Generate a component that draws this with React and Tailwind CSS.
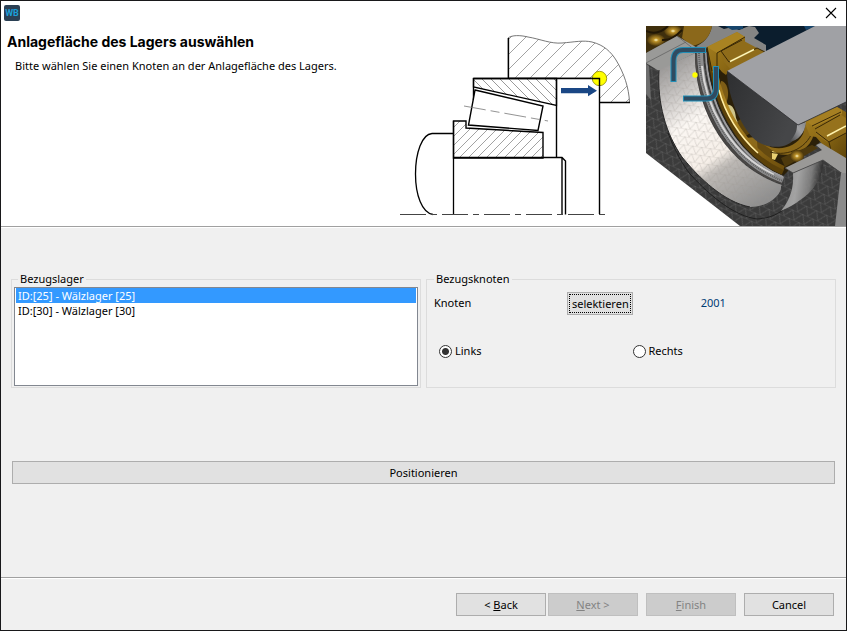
import { useState } from "react";

const bearings = [
  { id: 25, label: "ID:[25] - Wälzlager [25]" },
  { id: 30, label: "ID:[30] - Wälzlager [30]" },
];

export default function App() {
  return (
    <div className="min-h-screen flex flex-col border border-[#18181a] bg-[#f0f0f0] font-['Noto_Sans','Open_Sans',sans-serif] text-[11px] text-black">
      <TitleBar />
      <Header />
      <Content />
      <Footer />
    </div>
  );
}

/* ─── Window title bar ─── */
function TitleBar() {
  return (
    <div className="flex h-[25px] items-start justify-between bg-white pl-[3px] pr-[7px] pt-1">
      <svg width="16" height="16" viewBox="0 0 16 16" aria-label="WB">
        <rect width="16" height="16" rx="2" fill="#2b4054" />
        <text x="8" y="11" textAnchor="middle" fontFamily="Roboto, sans-serif" fontSize="9" fontWeight="bold" fill="#1b9fd8">WB</text>
      </svg>
      <button type="button" aria-label="Close" className="flex h-4 w-4 items-center justify-center">
        <svg width="12" height="12" viewBox="0 0 12 12" fill="none" stroke="#000" strokeWidth="1.1">
          <path d="M1 1 11 11M11 1 1 11" />
        </svg>
      </button>
    </div>
  );
}

/* ─── White header with the two illustrations ─── */
function Header() {
  return (
    <header className="flex border-b border-[#a0a0a0] bg-white">
      <div className="min-w-0 flex-1 pl-[6px] pt-2">
        <h1 className="font-['Inter','Liberation_Sans',sans-serif] text-sm leading-4 font-bold">
          Anlagefläche des Lagers auswählen
        </h1>
        <p className="pl-2 pt-2 leading-4">
          Bitte wählen Sie einen Knoten an der Anlagefläche des Lagers.
        </p>
      </div>
      <BearingDrawing />
      <BearingRender />
    </header>
  );
}

function BearingDrawing() {
  return (
    <svg className="mr-[14px] shrink-0" width="232" height="200" viewBox="400 26 232 200" fill="none" stroke="#000">
      <defs>
        <pattern id="hatchWide" width="15" height="15" patternUnits="userSpaceOnUse" x="5" y="3">
          <path d="M-1 16 16 -1M-1 1 1 -1M14 16 16 14" stroke="#8a8a8a" strokeWidth="0.8" />
        </pattern>
        <pattern id="hatchInner" width="9" height="9" patternUnits="userSpaceOnUse" x="3" y="2">
          <path d="M-1 10 10 -1M-1 1 1 -1M8 10 10 8" stroke="#8a8a8a" strokeWidth="0.8" />
        </pattern>
        <pattern id="hatchOuter" width="9" height="9" patternUnits="userSpaceOnUse" x="4" y="6">
          <path d="M-1 -1 10 10M8 -1 10 1M-1 8 1 10" stroke="#808080" strokeWidth="0.8" />
        </pattern>
      </defs>

      {/* housing */}
      <path
        d="M508 78V38C512 35 520 35 528 37C540 39 551 44 562 43C575 42 583 40 592 42C604 45 611 52 616 60C624 73 629 88 629.500 102.500H599.500V78Z"
        fill="url(#hatchWide)"
        stroke="#555"
        strokeWidth="0.8"
      />
      <path d="M508.500 38V78M600 102.500H630" strokeWidth="1.3" />

      {/* outer ring */}
      <path d="M473.500 78.500H556.500V105.500L473.500 87Z" fill="url(#hatchOuter)" strokeWidth="1.3" />
      <path d="M473.500 78.500H599.500V214M473.500 78V100M556.500 78V158" strokeWidth="1.4" />

      {/* roller */}
      <path d="M475 90 543 106 538 130.500 468.500 125Z" fill="#fff" strokeWidth="1.4" />
      <path d="M464 106 548 121" stroke="#777" strokeWidth="0.8" strokeDasharray="22 5 9 5" />

      {/* inner ring */}
      <path d="M453.500 158V121H466V128L543 132.500V158Z" fill="url(#hatchInner)" strokeWidth="1.4" />

      {/* shaft */}
      <path d="M453 133.500H432C422 134 415.500 153 415.500 174C415.500 195 422 213 433 214.500M453.500 121V214.500" strokeWidth="1.3" />
      <path d="M453 157.500H562L565.500 161V214.500M562 158V214.500" strokeWidth="1.4" />
      <path d="M400 214.500H608" stroke="#444" strokeDasharray="26 5 6 5" />

      {/* contact point */}
      <circle cx="599.500" cy="78.500" r="7.200" fill="#ff0" stroke="#8a8400" strokeWidth="0.8" />
      <path d="M592 78.500H599.500V86" strokeWidth="1.4" />
      <path d="M561 88H588V85L597 90.700 588 96.300V93.300H561Z" fill="#1a4785" stroke="none" />
    </svg>
  );
}

function BearingRender() {
  return (
    <svg className="shrink-0" width="200" height="200" viewBox="0 0 200 200">
      <defs>
        <pattern id="meshDark" width="11" height="9" patternUnits="userSpaceOnUse" patternTransform="rotate(24)">
          <path d="M0 0H11M0 0 5 9 11 0" stroke="#7a7a7a" strokeWidth="0.4" fill="none" />
        </pattern>
        <pattern id="meshLight" width="9" height="8" patternUnits="userSpaceOnUse" patternTransform="rotate(8)">
          <path d="M0 0H9M0 0 4 8 9 0" stroke="#99958f" strokeWidth="0.3" fill="none" />
        </pattern>
        <linearGradient id="race" x1="20" y1="40" x2="110" y2="180" gradientUnits="userSpaceOnUse">
          <stop offset="0" stopColor="#9c9a99" />
          <stop offset="0.18" stopColor="#c9c6c4" />
          <stop offset="0.36" stopColor="#fbf7f3" />
          <stop offset="0.62" stopColor="#f6efe8" />
          <stop offset="0.7" stopColor="#bdb9b5" />
          <stop offset="1" stopColor="#8f8f8f" />
        </linearGradient>
        <linearGradient id="gold" x1="0" y1="0" x2="1" y2="1">
          <stop offset="0" stopColor="#a98322" />
          <stop offset="0.5" stopColor="#8b6814" />
          <stop offset="1" stopColor="#5c430a" />
        </linearGradient>
        <linearGradient id="blockFront" x1="0" y1="0" x2="1" y2="0.4">
          <stop offset="0" stopColor="#2e2f31" />
          <stop offset="1" stopColor="#454648" />
        </linearGradient>
        <linearGradient id="blockSide" x1="0" y1="1" x2="1" y2="0">
          <stop offset="0" stopColor="#3c3d3f" />
          <stop offset="0.6" stopColor="#9fa0a3" />
          <stop offset="1" stopColor="#86878a" />
        </linearGradient>
        <linearGradient id="lip" x1="0" y1="0" x2="1" y2="0.2">
          <stop offset="0" stopColor="#8e8e8e" />
          <stop offset="0.45" stopColor="#a3a3a3" />
          <stop offset="0.75" stopColor="#7b7b7b" />
          <stop offset="1" stopColor="#262626" />
        </linearGradient>
        <linearGradient id="ringGold" x1="66" y1="30" x2="137" y2="144" gradientUnits="userSpaceOnUse">
          <stop offset="0" stopColor="#7d5b10" />
          <stop offset="0.4" stopColor="#b58b24" />
          <stop offset="0.75" stopColor="#8a6616" />
          <stop offset="1" stopColor="#6b4d0c" />
        </linearGradient>
        <radialGradient id="roller">
          <stop offset="0" stopColor="#fff8c8" />
          <stop offset="0.3" stopColor="#b98f28" />
          <stop offset="1" stopColor="#4b360b" />
        </radialGradient>
      </defs>

      {/* dark meshed cut face */}
      <path d="M0 0H200V200H94L0 127Z" fill="#3b3b3b" />
      <path d="M0 0H200V200H94L0 127Z" fill="url(#meshDark)" />

      {/* background behind the rollers */}
      <path d="M60 0H200V60H110L60 30Z" fill="#0b1d2d" />
      <path d="M66 0H72L78 3 86 1 93 4 103 0 109 1 113 7 108 12 120 19 120 26 60 26 50 20Z" fill="#858584" />
      <path d="M79 0 86 4 97 3V0ZM158 0 160 4 170 0Z" fill="#17456b" />
      <path d="M0 0H66C64 11 57 18 48 21L31 10 0 27Z" fill="#3f2f0d" />
      <path d="M38 0H66C64 11 57 18 46 20L36 12Z" fill="#8b681b" />
      <ellipse cx="10" cy="14" rx="9" ry="6" fill="url(#roller)" />
      <ellipse cx="27" cy="5" rx="9" ry="6" fill="url(#roller)" />
      <path d="M0 5Q12 10 22 0M16 14Q26 15 36 4" stroke="#211706" strokeWidth="2" fill="none" />

      {/* top face of the outer ring */}
      <path d="M0 27 31 10 60 27 49 27 13 45 0 37Z" fill="#9a9a98" />
      <path d="M0 37 40 16M31 10 49 24" stroke="#5d5d5d" strokeWidth="0.7" fill="none" />
      <path d="M0 38 3 40 5 74 0 68Z" fill="#6d6d6d" />

      {/* raceway */}
      <path d="M13 44 49 27C49 44 51 66 63 92C76 120 100 147 136 159L135 160C136 168 123 181 104 181C78 176 53 152 36 131C20 108 11 77 13 44Z" fill="url(#race)" />
      <path d="M13 44 49 27C49 44 51 66 63 92C76 120 100 147 136 159L135 160C136 168 123 181 104 181C78 176 53 152 36 131C20 108 11 77 13 44Z" fill="url(#meshLight)" />
      <path d="M13 44C11 77 20 108 36 131C53 152 78 176 104 181" stroke="#262626" strokeWidth="1" fill="none" />
      <path d="M22 107C30 127 37 139 44 148C66 172 89 190 111 193C126 192 133 187 140 182" stroke="#1f1f1f" strokeWidth="1" fill="none" />

      {/* space between the rings */}
      <path d="M60 22C62 76 89 132 137 150L157 130 180 111 170 80 81 30Z" fill="#2b2009" />

      {/* rollers and cage pockets in the gap */}
      <path d="M75 55C83 56 84 72 79 79L74 68Z" fill="#7e5d16" />
      <path d="M78 80C85 76 89 82 90 92L96 106 88 101Z" fill="#cfc58a" />
      <ellipse cx="98" cy="101" rx="8" ry="9" fill="#5a420e" />
      <path d="M99 112 110 111 114 122 108 126Z" fill="#8c6a1b" />
      <path d="M111 115 118 114 129 126 127 135 112 128Z" fill="#654a10" />
      <path d="M126 125 133 126 129 134 126 133Z" fill="#e8cf72" />

      {/* shoulder and seal */}
      <path d="M50 28C50 70 73 136 136 157" stroke="#4a4745" strokeWidth="2" fill="none" />
      <path d="M54 27C55 70 78 132 137 154" stroke="#8e8e8f" strokeWidth="6" fill="none" />
      <path d="M53 27C54 70 77 132 137 155" stroke="#5f5f5f" strokeWidth="2" strokeDasharray="1 1" fill="none" />
      <path d="M56 40C59 76 82 128 128 148" stroke="#d7d6d6" strokeWidth="2" fill="none" />
      <path d="M60 26C61 72 85 129 137 151" stroke="#9c9c9f" strokeWidth="2" fill="none" />
      <path d="M61 26C63 70 86 127 137 149" stroke="#242424" strokeWidth="1" fill="none" />

      {/* gold cage ring */}
      <path d="M65 25C67 70 90 125 137 146" stroke="#5b410a" strokeWidth="6" fill="none" />
      <path d="M68 25C69 69 93 122 138 142" stroke="url(#ringGold)" strokeWidth="4" fill="none" />
      <path d="M73 64C79 88 94 111 112 127" stroke="#ffeda4" strokeWidth="1.500" fill="none" />

      {/* upper cage block */}
      <path d="M61 21 91 6 99 11V19L118 26 82 46 80 49 76 46 71 40 70 56 66 45Z" fill="url(#gold)" />
      <path d="M61 21 91 6 99 11 71 27Z" fill="#a98322" />
      <path d="M75 25 96 14 111 22 119 26 85 44 78 36Z" fill="#8f6c1a" />
      <path d="M71 27 99 11M75 25 96 14M75 25 83 36 111 22 119 26M71 27V50M61 21 66 45" stroke="#392805" strokeWidth="1" fill="none" />
      <path d="M84 35.500 108 23.500" stroke="#fff6b5" strokeWidth="1.500" />

      {/* cage below the inner ring */}
      <path d="M118 119C132 125 149 123 157 108L160 97 168 101C170 121 149 132 132 128Z" fill="#8b6818" />
      <path d="M124 126C142 131 163 122 168 101" stroke="#3e2d08" strokeWidth="1" fill="none" />
      <path d="M135 132 166 119 172 122 139 141Z" fill="#4d390d" />
      <ellipse cx="151" cy="130" rx="7" ry="6" fill="url(#roller)" />
      <path d="M158 95 191 81 200 86V136L188 131 177 119 170 111 164 110Z" fill="url(#gold)" />
      <path d="M161 96 191 81 196 84 196 88 168 101Z" fill="#a57f22" />
      <path d="M169 102 194 88 200 92V107L181 116 170 109Z" fill="#96721c" />
      <path d="M166 100 195 86M169 103 194 89M170 106 183 116 200 107M183 116 186 129" stroke="#3a2906" strokeWidth="1" fill="none" />
      <path d="M181 110 200 100" stroke="#fff3ad" strokeWidth="1.500" />

      {/* inner ring block */}
      <path d="M81 45C81 72 98 107 112 116C125 124 145 122 149 111L152 99Z" fill="url(#blockFront)" />
      <path d="M151 99 160 96C159 107 152 115 143 116C149 110 151 105 151 99Z" fill="url(#blockSide)" />
      <path d="M81 45 169 0H200V76L152 99Z" fill="#a0a1a5" />
      <path d="M81 45 152 99 200 76" stroke="#303136" strokeWidth="0.8" fill="none" />

      {/* lower right section of the outer ring */}
      <path d="M147 147 177 134C178 154 164 172 135 185C144 174 148 162 147 147Z" fill="url(#lip)" />
      <path d="M147 147 177 134C178 154 164 172 135 185C144 174 148 162 147 147Z" fill="url(#meshLight)" opacity="0.4" />
      <path d="M139 142 176 124 170 119 175 117 200 132V147H196L177 134 147 147Z" fill="#9a9997" />
      <path d="M139 142 147 147 177 134 195 147" stroke="#444" strokeWidth="0.8" fill="none" />
      <path d="M195 147H200V200H189Z" fill="#8b8b8b" />

      {/* selection brackets */}
      <g fill="none" strokeLinejoin="round">
        <path d="M27.500 56V35Q27.500 24 37 24H60M70 40V62Q70 72.500 61 72.500H37" stroke="#218fb7" strokeWidth="6" />
        <path d="M27.500 55V35Q27.500 24 37 24H59M70 41V62Q70 72.500 61 72.500H38" stroke="#304b60" strokeWidth="4" />
      </g>
      <circle cx="49" cy="49" r="2.700" fill="#ff0" />
    </svg>
  );
}

/* ─── Wizard page ─── */
function Content() {
  const [bearing, setBearing] = useState(25);
  const [side, setSide] = useState("links");

  return (
    <main className="flex-1 border-t border-white px-[10px] pt-[43px] pb-10">
      <div className="grid grid-cols-2 gap-[5px]">
        <fieldset className="min-w-0 h-[117px] border border-[#dcdcdc] px-[2px]">
          <legend className="ml-1 px-[2px] leading-4">Bezugslager</legend>
          <select
            size={5}
            aria-label="Bezugslager"
            value={bearing}
            onChange={(e) => setBearing(Number(e.target.value))}
            className="block h-[99px] w-full overflow-hidden border border-[#828790] bg-white px-px py-0 outline-none"
          >
            {bearings.map((b) => (
              <option
                key={b.id}
                value={b.id}
                className="h-[15px] min-h-[15px] px-[2px] py-0 leading-[15px] checked:bg-[linear-gradient(#3399ff,#3399ff)] checked:[-webkit-text-fill-color:#fff]"
              >
                {b.label}
              </option>
            ))}
          </select>
        </fieldset>

        <fieldset className="min-w-0 h-[117px] border border-[#dcdcdc] pl-[7px] pr-px">
          <legend className="px-[2px] leading-4">Bezugsknoten</legend>
          <div className="grid grid-cols-3 items-center pt-[5px]">
            <span>Knoten</span>
            <button
              type="button"
              className="h-[23px] w-[66px] border border-[#adadad] bg-[#e1e1e1] leading-4 outline-1 -outline-offset-3 outline-dotted outline-black"
            >
              selektieren
            </button>
            <output className="text-[#003c74]">2001</output>
          </div>
          <div className="grid grid-cols-2 pl-[5px] pr-2 pt-7">
            <SideOption value="links" label="Links" side={side} onSelect={setSide} />
            <SideOption value="rechts" label="Rechts" side={side} onSelect={setSide} />
          </div>
        </fieldset>
      </div>

      <div className="px-px pt-[73px]">
        <button type="button" className="h-[23px] w-full border border-[#adadad] bg-[#e1e1e1] leading-4">
          Positionieren
        </button>
      </div>
    </main>
  );
}

function SideOption({ value, label, side, onSelect }) {
  return (
    <label className="flex items-center gap-[3px] leading-4">
      <input
        type="radio"
        name="side"
        value={value}
        checked={side === value}
        onChange={() => onSelect(value)}
        className="h-[13px] w-[13px] appearance-none rounded-full border border-[#333] bg-white checked:bg-[radial-gradient(circle,#333_3px,#fff_4px)]"
      />
      {label}
    </label>
  );
}

/* ─── Wizard buttons ─── */
function Footer() {
  return (
    <footer className="border-t border-[#a0a0a0]">
      <div className="flex justify-end border-t border-white pt-[14px] pr-3 pb-[14px]">
        <WizardButton>
          &lt; <u>B</u>ack
        </WizardButton>
        <WizardButton className="ml-[2px]" disabled>
          <u>N</u>ext &gt;
        </WizardButton>
        <WizardButton className="ml-2" disabled>
          <u>F</u>inish
        </WizardButton>
        <WizardButton className="ml-2">Cancel</WizardButton>
      </div>
    </footer>
  );
}

function WizardButton({ className = "", disabled = false, children }) {
  return (
    <button
      type="button"
      disabled={disabled}
      className={`h-[23px] w-[90px] border border-[#adadad] bg-[#e1e1e1] leading-4 disabled:border-[#bfbfbf] disabled:bg-[#cccccc] disabled:text-[#838383] ${className}`}
    >
      {children}
    </button>
  );
}
